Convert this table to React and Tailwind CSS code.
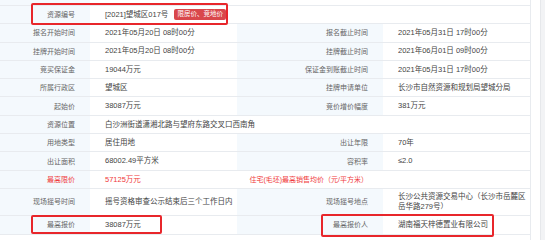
const rows = [
  { l1: "报名开始时间", v1: "2021年05月20日 08时00分", l2: "报名截止时间", v2: "2021年05月31日 17时00分" },
  { l1: "挂牌开始时间", v1: "2021年05月20日 08时00分", l2: "挂牌截止时间", v2: "2021年06月01日 09时00分" },
  { l1: "竞买保证金", v1: "19044万元", l2: "保证金到账截止时间", v2: "2021年05月31日 17时00分" },
  { l1: "所属行政区", v1: "望城区", l2: "挂牌申请单位", v2: "长沙市自然资源和规划局望城分局" },
  { l1: "起始价", v1: "38087万元", l2: "竞价增价幅度", v2: "381万元" },
  { l1: "资源位置", span: "白沙洲街道潇湘北路与望府东路交叉口西南角" },
  { l1: "用地类型", v1: "居住用地", l2: "出让年限", v2: "70年" },
  { l1: "出让面积", v1: "68002.49平方米", l2: "容积率", v2: "≤2.0" },
  { l1: "最高限价", v1: "57125万元", l2: "住宅(毛坯)最高销售均价（元/平方米）", v2: "", red: true },
];

function Label({ children, red, white }) {
  return (
    <div
      className={`flex items-center justify-end pr-[15px] whitespace-nowrap text-[7px] ${white ? "bg-white" : "bg-[#f4f9fd]"} ${red ? "text-[#f03a3a]" : "text-[#666]"}`}
    >
      {children}
    </div>
  );
}

function Value({ children, red, className = "" }) {
  return (
    <div className={`flex items-center pl-[15px] whitespace-nowrap ${red ? "text-[#f03a3a]" : "text-[#444]"} ${className}`}>
      {children}
    </div>
  );
}

export default function App() {
  return (
    <div className="relative w-[545px] h-[240px] overflow-hidden bg-white font-['Liberation_Sans','Noto_Sans_CJK_SC',sans-serif] text-[7.5px] leading-none">
      <div className="flex h-full">
        <div className="w-[531px] border-r border-[#e8ebef]">
          {/* cut-off row above */}
          <div className="grid grid-cols-[90px_440px] h-[6px] border-b border-[#e8ebef]">
            <div className="bg-[#f4f9fd]" />
            <div />
          </div>

          <div className="grid grid-cols-[90px_440px] h-[18.3px] border-b border-[#e8ebef]">
            <Label>资源编号</Label>
            <Value>
              [2021]望城区017号
              <span className="ml-[6px] px-[3px] py-[2px] rounded-[2px] bg-[#d9474b] text-white text-[6.5px]">限房价、竞地价</span>
            </Value>
          </div>

          {rows.map((r) =>
            r.span ? (
              <div key={r.l1} className="grid grid-cols-[90px_440px] h-[18.3px] border-b border-[#e8ebef]">
                <Label>{r.l1}</Label>
                <Value>{r.span}</Value>
              </div>
            ) : (
              <div key={r.l1} className="grid grid-cols-[90px_147px_146px_147px] h-[18.3px] border-b border-[#e8ebef]">
                <Label red={r.red}>{r.l1}</Label>
                <Value red={r.red}>{r.v1}</Value>
                <Label red={r.red} white={r.red}>{r.l2}</Label>
                <Value>{r.v2}</Value>
              </div>
            )
          )}

          <div className="grid grid-cols-[90px_147px_146px_147px] h-[27px] border-b border-[#e8ebef]">
            <Label>现场摇号时间</Label>
            <Value>摇号资格审查公示结束后三个工作日内</Value>
            <Label>现场摇号地点</Label>
            <div className="flex flex-col justify-center pl-[15px] text-[#444] leading-[10px] whitespace-nowrap">
              <span>长沙公共资源交易中心（长沙市岳麓区</span>
              <span>岳华路279号）</span>
            </div>
          </div>

          <div className="grid grid-cols-[90px_147px_146px_147px] h-[19px] border-b border-[#e8ebef]">
            <Label>最高报价</Label>
            <Value>38087万元</Value>
            <Label>最高报价人</Label>
            <Value>湖南福天梓德置业有限公司</Value>
          </div>
        </div>
        <div className="w-[9px]" />
        <div className="flex-1 bg-[#f2f3f5] border-l border-[#e6e8eb]" />
      </div>

      {/* annotation boxes */}
      <div className="absolute left-[31px] top-[3px] w-[197px] h-[22px] border-2 border-[#e8262b] rounded-[2px]" />
      <div className="absolute left-[31px] top-[215px] w-[131px] h-[19px] border-2 border-[#e8262b] rounded-[2px]" />
      <div className="absolute left-[321px] top-[214px] w-[173px] h-[23px] border-2 border-[#e8262b] rounded-[2px]" />
    </div>
  );
}
